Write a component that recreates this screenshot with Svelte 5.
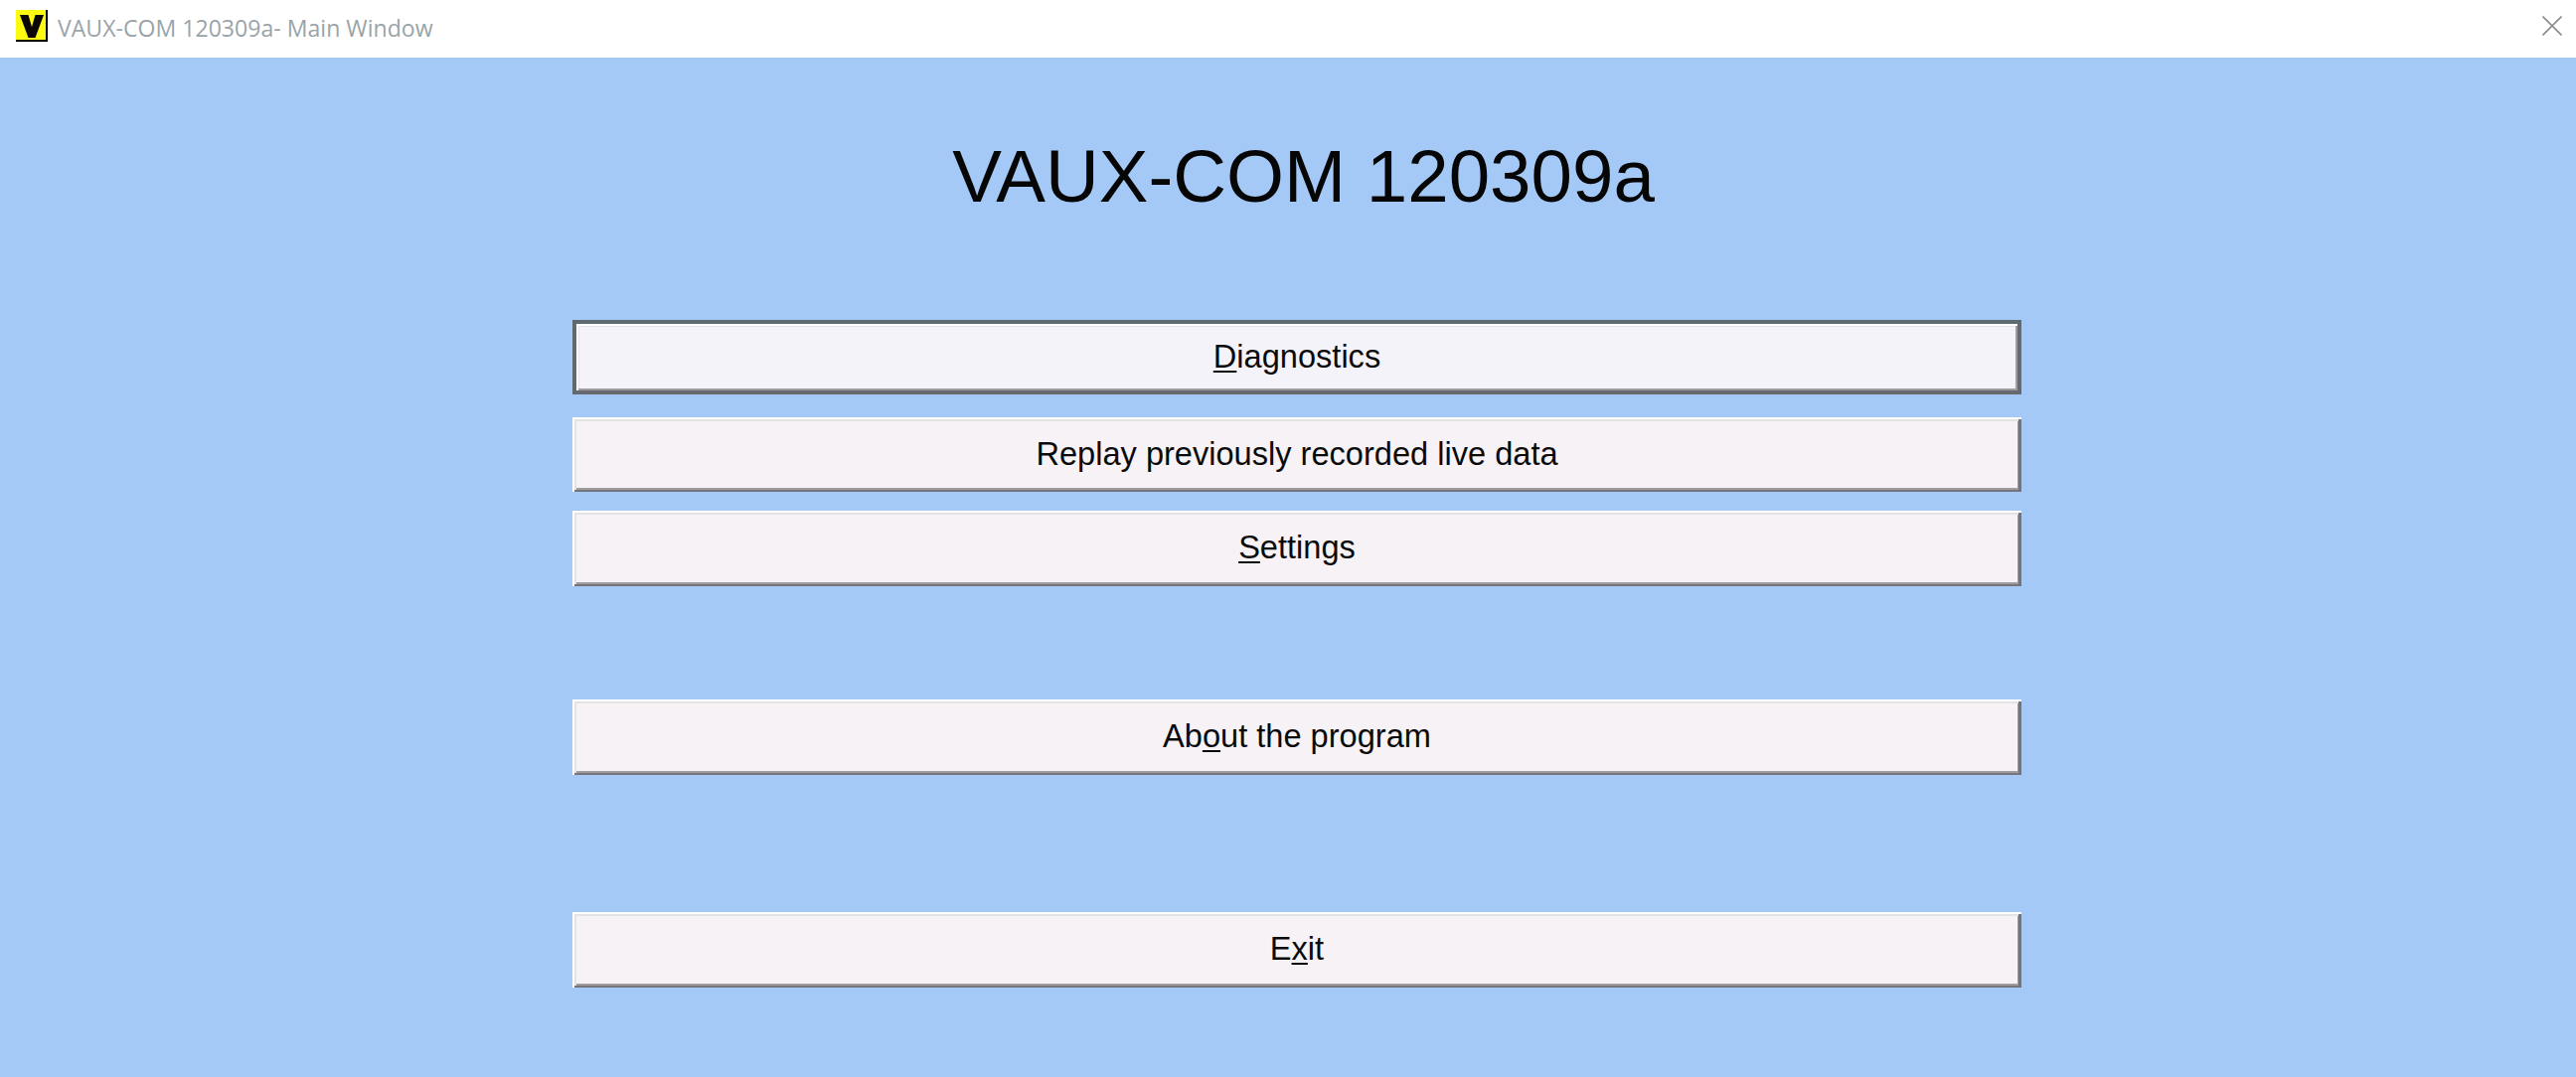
<script>
  const TITLE = "VAUX-COM 120309a";

  // hotkey letter is split out so it can be underlined
  const groups = [
    { cls: "g-menu", items: [
      { before: "", key: "D", after: "iagnostics", focused: true },
      { before: "Replay previously recorded live data", key: "", after: "" },
      { before: "", key: "S", after: "ettings" },
    ]},
    { cls: "g-about", items: [{ before: "Ab", key: "o", after: "ut the program" }] },
    { cls: "g-exit", items: [{ before: "E", key: "x", after: "it" }] },
  ];
</script>

<div class="window">
  <header class="titlebar">
    <svg class="app-icon" width="32" height="32" viewBox="0 0 32 32" aria-hidden="true">
      <rect width="32" height="32" fill="#000" />
      <rect x="0" y="0" width="30" height="30" fill="#fbfb12" />
      <path d="M4 5 H12.5 L16 17 L19.5 5 H28 L19.5 28 H12.5 Z" fill="#0c0808" />
    </svg>
    <span class="caption">{TITLE}- Main Window</span>
    <svg class="close" width="20" height="20" viewBox="0 0 20 20" aria-hidden="true">
      <path d="M0.5 0.5 L19.5 19.5 M19.5 0.5 L0.5 19.5" stroke="#8c8c8c" stroke-width="1.6" fill="none" />
    </svg>
  </header>

  <main class="content">
    <h1>{TITLE}</h1>
    {#each groups as group}
      <div class="group {group.cls}">
        {#each group.items as item}
          <button class="btn" class:focused={item.focused}>
            <span>{item.before}<u>{item.key}</u>{item.after}</span>
          </button>
        {/each}
      </div>
    {/each}
  </main>
</div>

<style>
  :global(body) { margin: 0; background: #a4c9f7; }
  .window {
    width: 2592px;
    height: 1084px;
    overflow: hidden;
    display: flex;
    flex-direction: column;
    font-family: "Liberation Sans", Arial, sans-serif;
  }
  .titlebar {
    height: 58px;
    flex: none;
    background: #fff;
    display: flex;
    align-items: center;
    padding: 0 14px 0 16px;
    box-sizing: border-box;
  }
  .app-icon { flex: none; margin-top: -6px; }
  .caption {
    margin-left: 10px;
    margin-top: -3px;
    font: 23.1px "Open Sans", "Noto Sans", sans-serif;
    color: #9aa4a8;
    white-space: nowrap;
  }
  .close { margin-left: auto; margin-top: -6px; }
  .content {
    flex: 1;
    background: #a4c9f7;
    display: flex;
    flex-direction: column;
    align-items: flex-start;
    padding-left: 576px;
  }
  h1 {
    width: 1458px;
    margin: 0;
    padding: 77px 0 0 13px;
    height: 264px;
    box-sizing: border-box;
    font-size: 74.5px;
    font-weight: 400;
    line-height: 85px;
    text-align: center;
    color: #060606;
  }
  .group { display: flex; flex-direction: column; gap: 19px; width: 1458px; }
  .g-about { margin-top: 114px; }
  .g-exit { margin-top: 138px; }
  .btn {
    display: block;
    width: 100%;
    height: 76px;
    padding: 0 0 2px;
    border: 0;
    border-radius: 0;
    background: #f6f2f6;
    color: #0a0a0a;
    font: 32.6px "Liberation Sans", Arial, sans-serif;
    text-align: center;
    box-shadow:
      inset 2px 2px 0 #fff,
      inset -3px -2px 0 #74747a,
      inset 4px 4px 0 #e3e3e4,
      inset -4px -4px 0 #a09ca2;
  }
  .btn:nth-child(2) { height: 75px; }
  .btn.focused {
    height: 75px;
    margin-bottom: 4px;
    background: #f4f3f9;
    box-shadow:
      inset 4px 4px 0 #5f6a70,
      inset -4px -4px 0 #666a6e,
      inset 6px 6px 0 #fff,
      inset -6px -6px 0 #a09ca2,
      inset 7px 7px 0 #e4e3ea;
  }
  u { text-decoration-thickness: 2px; text-underline-offset: 3px; }
</style>
